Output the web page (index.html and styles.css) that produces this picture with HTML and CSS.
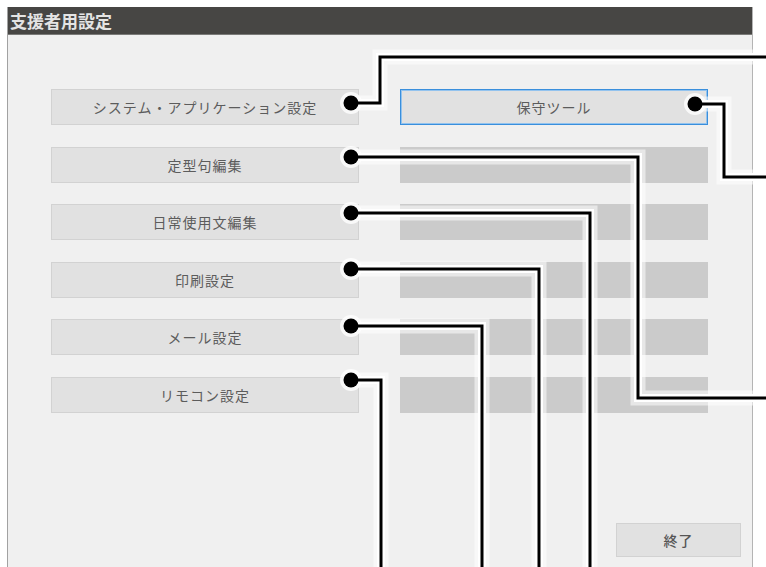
FILE: index.html
```html
<!DOCTYPE html>
<html lang="ja">

<head>
  <meta charset="UTF-8" />
  <meta name="viewport" content="width=device-width, initial-scale=1.0" />
  <title>支援者用設定</title>
  <link rel="stylesheet" href="styles.css">
</head>

<body>
  <div class="window">
    <header class="titlebar">支援者用設定</header>
    <div class="content">
      <div class="grid">
        <button class="btn">システム・アプリケーション設定</button>
        <button class="btn btn-focus">保守ツール</button>
        <button class="btn">定型句編集</button>
        <div class="blank"></div>
        <button class="btn">日常使用文編集</button>
        <div class="blank"></div>
        <button class="btn">印刷設定</button>
        <div class="blank"></div>
        <button class="btn">メール設定</button>
        <div class="blank"></div>
        <button class="btn">リモコン設定</button>
        <div class="blank"></div>
      </div>
      <div class="footer">
        <button class="btn btn-exit">終了</button>
      </div>
    </div>
  </div>

  <!-- callout lines drawn over the dialog -->
  <svg class="wires" width="766" height="567" viewBox="0 0 766 567">
    <g class="glow-wide">
      <polyline points="351,103 380,103 380,57 766,57" />
      <polyline points="695,104 724,104 724,177 766,177" />
      <polyline points="351,157 638,157 638,398 766,398" />
      <polyline points="351,213 590,213 590,567" />
      <polyline points="351,269 539,269 539,567" />
      <polyline points="351,326 482,326 482,567" />
      <polyline points="351,380 381,380 381,567" />
    </g>
    <g class="glow">
      <polyline points="351,103 380,103 380,57 766,57" />
      <polyline points="695,104 724,104 724,177 766,177" />
      <polyline points="351,157 638,157 638,398 766,398" />
      <polyline points="351,213 590,213 590,567" />
      <polyline points="351,269 539,269 539,567" />
      <polyline points="351,326 482,326 482,567" />
      <polyline points="351,380 381,380 381,567" />
    </g>
    <g class="dot-glow">
      <circle cx="351" cy="103" r="11" />
      <circle cx="695" cy="104" r="11" />
      <circle cx="351" cy="157" r="11" />
      <circle cx="351" cy="213" r="11" />
      <circle cx="351" cy="269" r="11" />
      <circle cx="351" cy="326" r="11" />
      <circle cx="351" cy="380" r="11" />
    </g>
    <g class="line">
      <polyline points="351,103 380,103 380,57 766,57" />
      <polyline points="695,104 724,104 724,177 766,177" />
      <polyline points="351,157 638,157 638,398 766,398" />
      <polyline points="351,213 590,213 590,567" />
      <polyline points="351,269 539,269 539,567" />
      <polyline points="351,326 482,326 482,567" />
      <polyline points="351,380 381,380 381,567" />
    </g>
    <g class="dot">
      <circle cx="351" cy="103" r="7.5" />
      <circle cx="695" cy="104" r="7.5" />
      <circle cx="351" cy="157" r="7.5" />
      <circle cx="351" cy="213" r="7.5" />
      <circle cx="351" cy="269" r="7.5" />
      <circle cx="351" cy="326" r="7.5" />
      <circle cx="351" cy="380" r="7.5" />
    </g>
  </svg>
</body>

</html>
```

FILE: styles.css
```css
html,
body {
  margin: 0;
  height: 567px;
  overflow: hidden;
  background: #fff;
  font-family: "Noto Sans CJK JP", "Noto Sans", sans-serif;
}

.window {
  margin: 7px 0 0 7px;
  width: 746px;
  height: 560px;
  box-sizing: border-box;
  background: #f0f0f0;
  border-left: 1px solid #a2a2a2;
  border-right: 1px solid #b4b4b4;
}

.titlebar {
  height: 27px;
  line-height: 27px;
  padding-left: 2px;
  background: #474644;
  border-bottom: 1px solid #7a7a78;
  color: #e4e4e4;
  font-size: 17px;
  font-weight: bold;
}

.content {
  padding: 54px 11px 0 43px;
}

.grid {
  display: grid;
  grid-template-columns: 308px 308px;
  grid-auto-rows: 36px;
  column-gap: 41px;
  row-gap: 21.5px;
}

.btn {
  margin: 0;
  padding: 0;
  border: 1px solid #d2d2d2;
  background: #e1e1e1;
  color: #5c5c5c;
  font-family: "Noto Sans CJK JP", sans-serif;
  font-size: 14px;
  letter-spacing: 1px;
}

.btn-focus {
  border: 1px solid #3a8fdc;
  box-shadow: inset 0 0 0 1px #93c3ee;
}

.blank {
  background: #cbcbcb;
}

.footer {
  display: flex;
  justify-content: flex-end;
  margin-top: 110px;
}

.btn-exit {
  width: 125px;
  height: 34px;
  color: #555;
  font-weight: 500;
}

.wires {
  position: absolute;
  left: 0;
  top: 0;
  pointer-events: none;
}

.wires polyline {
  fill: none;
  stroke-linejoin: miter;
}

.glow-wide polyline {
  stroke: #fff;
  stroke-width: 15;
  stroke-opacity: 0.55;
}

.glow polyline {
  stroke: #fff;
  stroke-width: 8;
}

.line polyline {
  stroke: #000;
  stroke-width: 3;
}

.dot-glow circle {
  fill: #fff;
  fill-opacity: 0.8;
}

.dot circle {
  fill: #000;
}
```
